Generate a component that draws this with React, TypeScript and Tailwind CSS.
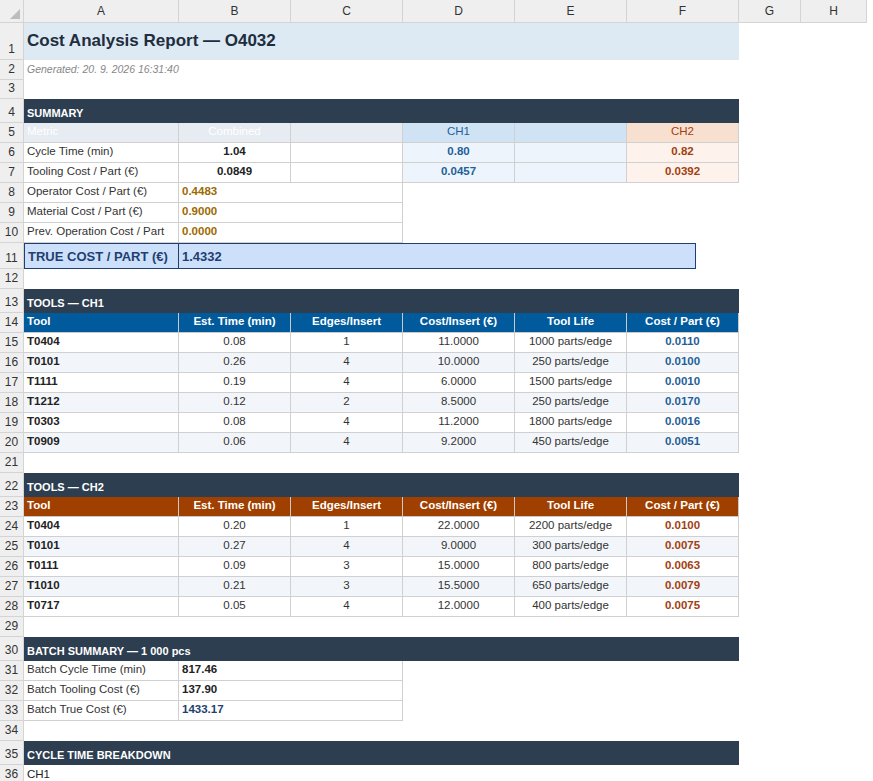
import React from "react"

const W = [155, 112, 112, 112, 112, 112, 62, 66]
const LETTERS = ["A", "B", "C", "D", "E", "F", "G", "H"]

type CellDef = { span?: number; cls?: string; text?: React.ReactNode }

const sum = (from: number, n: number) => W.slice(from, from + n).reduce((a, b) => a + b, 0)

function Row({ n, h, cells = [] }: { n: number; h: number; cells?: CellDef[] }) {
  let col = 0
  const out: React.ReactNode[] = []
  for (const c of cells) {
    const span = c.span ?? 1
    out.push(
      <div
        key={col}
        style={{ width: sum(col, span) }}
        className={`shrink-0 box-border flex items-end pb-[2px] px-[3px] overflow-hidden whitespace-nowrap ${c.cls ?? ""}`}
      >
        {c.text}
      </div>
    )
    col += span
  }
  return (
    <div className="flex" style={{ height: h }}>
      <div className="w-[24px] shrink-0 bg-[#efefef] border-r border-b border-[#d4d4d4] flex items-end justify-center pb-[1px] text-[12px] text-[#333]">
        {n}
      </div>
      {out}
    </div>
  )
}

const bd = "border-r border-b border-[#d0d0d0]"
const dark = (t: string): CellDef[] => [{ span: 6, cls: "bg-[#2d3e50] text-white font-bold text-[11px]", text: t }]

function ToolTable({ start, head, val, rows }: { start: number; head: string; val: string; rows: string[][] }) {
  const hd = `${head} text-white font-bold border-r border-b border-[#c9c9c9] justify-center`
  return (
    <>
      <Row n={start} h={20} cells={[
        { cls: `${hd} !justify-start`, text: "Tool" },
        { cls: hd, text: "Est. Time (min)" },
        { cls: hd, text: "Edges/Insert" },
        { cls: hd, text: "Cost/Insert (€)" },
        { cls: hd, text: "Tool Life" },
        { cls: hd, text: "Cost / Part (€)" },
      ]} />
      {rows.map((r, i) => {
        const bg = i % 2 ? "bg-[#f2f6fa]" : "bg-white"
        return (
          <Row key={i} n={start + 1 + i} h={20} cells={[
            { cls: `${bd} ${bg} font-bold text-[#222]`, text: r[0] },
            { cls: `${bd} ${bg} justify-center`, text: r[1] },
            { cls: `${bd} ${bg} justify-center`, text: r[2] },
            { cls: `${bd} ${bg} justify-center`, text: r[3] },
            { cls: `${bd} ${bg} justify-center`, text: r[4] },
            { cls: `${bd} ${bg} justify-center font-bold ${val}`, text: r[5] },
          ]} />
        )
      })}
    </>
  )
}

export default function App() {
  const gold = "text-[#9c6a00] font-bold"
  return (
    <div className="w-[873px] h-[781px] overflow-hidden bg-white text-[#333] text-[11.5px]" style={{ fontFamily: '"Liberation Sans", Arial, sans-serif' }}>
      <div className="flex h-[23px]">
        <div className="w-[24px] shrink-0 bg-[#efefef] border-r border-b border-[#d4d4d4] relative">
          <div className="absolute right-[3px] bottom-[3px] w-0 h-0 border-l-[10px] border-l-transparent border-b-[10px] border-b-[#bdbdbd]" />
        </div>
        {LETTERS.map((l, i) => (
          <div key={l} style={{ width: W[i] }} className="shrink-0 bg-[#efefef] border-r border-b border-[#d4d4d4] flex items-center justify-center text-[12px] text-[#333]">
            {l}
          </div>
        ))}
      </div>
      <Row n={1} h={37} cells={[{ span: 6, cls: "bg-[#dde9f3] text-[#1f2d3d] font-bold text-[17px] !pb-[7px]", text: "Cost Analysis Report — O4032" }]} />
      <Row n={2} h={20} cells={[{ span: 6, cls: "italic text-[#888] text-[10.5px]", text: "Generated: 20. 9. 2026 16:31:40" }]} />
      <Row n={3} h={19} />
      <Row n={4} h={24} cells={dark("SUMMARY")} />
      <Row n={5} h={20} cells={[
        { cls: `${bd} bg-[#e7ecf2] text-white`, text: "Metric" },
        { cls: `${bd} bg-[#e7ecf2] text-white justify-center`, text: "Combined" },
        { cls: `${bd} bg-[#e7ecf2]` },
        { cls: `${bd} bg-[#d0e3f5] text-[#1f5f99] justify-center`, text: "CH1" },
        { cls: `${bd} bg-[#d0e3f5]` },
        { cls: `${bd} bg-[#f7e0d0] text-[#a3400f] justify-center`, text: "CH2" },
      ]} />
      {[["Cycle Time (min)", "1.04", "0.80", "0.82"], ["Tooling Cost / Part (€)", "0.0849", "0.0457", "0.0392"]].map((r, i) => (
        <Row key={i} n={6 + i} h={20} cells={[
          { cls: bd, text: r[0] },
          { cls: `${bd} justify-center font-bold text-[#222]`, text: r[1] },
          { cls: bd },
          { cls: `${bd} bg-[#edf4fc] justify-center font-bold text-[#1f5f99]`, text: r[2] },
          { cls: `${bd} bg-[#edf4fc]` },
          { cls: `${bd} bg-[#fdf3ec] justify-center font-bold text-[#a3400f]`, text: r[3] },
        ]} />
      ))}
      {[["Operator Cost / Part (€)", "0.4483"], ["Material Cost / Part (€)", "0.9000"], ["Prev. Operation Cost / Part", "0.0000"]].map((r, i) => (
        <Row key={i} n={8 + i} h={20} cells={[
          { cls: bd, text: r[0] },
          { span: 2, cls: `${bd} ${gold}`, text: r[1] },
        ]} />
      ))}
      <div className="flex h-[26px]">
        <div className="w-[24px] shrink-0 bg-[#efefef] border-r border-b border-[#d4d4d4] flex items-end justify-center pb-[1px] text-[12px]">11</div>
        <div className="w-[672px] box-border flex bg-[#cce0fb] border border-[#1f3f6e] text-[#1f3f6e] font-bold">
          <div className="w-[154px] border-r border-[#1f3f6e] flex items-end pb-[2px] px-[3px] text-[13px]">TRUE COST / PART (€)</div>
          <div className="flex items-end pb-[2px] px-[3px] text-[13px]">1.4332</div>
        </div>
      </div>
      <Row n={12} h={20} />
      <Row n={13} h={24} cells={dark("TOOLS — CH1")} />
      <ToolTable start={14} head="bg-[#005a9c]" val="text-[#1f5f99]" rows={[
        ["T0404", "0.08", "1", "11.0000", "1000 parts/edge", "0.0110"],
        ["T0101", "0.26", "4", "10.0000", "250 parts/edge", "0.0100"],
        ["T1111", "0.19", "4", "6.0000", "1500 parts/edge", "0.0010"],
        ["T1212", "0.12", "2", "8.5000", "250 parts/edge", "0.0170"],
        ["T0303", "0.08", "4", "11.2000", "1800 parts/edge", "0.0016"],
        ["T0909", "0.06", "4", "9.2000", "450 parts/edge", "0.0051"],
      ]} />
      <Row n={21} h={20} />
      <Row n={22} h={24} cells={dark("TOOLS — CH2")} />
      <ToolTable start={23} head="bg-[#a04000]" val="text-[#a3400f]" rows={[
        ["T0404", "0.20", "1", "22.0000", "2200 parts/edge", "0.0100"],
        ["T0101", "0.27", "4", "9.0000", "300 parts/edge", "0.0075"],
        ["T0111", "0.09", "3", "15.0000", "800 parts/edge", "0.0063"],
        ["T1010", "0.21", "3", "15.5000", "650 parts/edge", "0.0079"],
        ["T0717", "0.05", "4", "12.0000", "400 parts/edge", "0.0075"],
      ]} />
      <Row n={29} h={20} />
      <Row n={30} h={24} cells={dark("BATCH SUMMARY — 1 000 pcs")} />
      {[["Batch Cycle Time (min)", "817.46"], ["Batch Tooling Cost (€)", "137.90"], ["Batch True Cost (€)", "1433.17"]].map((r, i) => (
        <Row key={i} n={31 + i} h={20} cells={[
          { cls: bd, text: r[0] },
          { span: 2, cls: `${bd} font-bold ${i === 2 ? "text-[#1f3f6e]" : "text-[#222]"}`, text: r[1] },
        ]} />
      ))}
      <Row n={34} h={20} />
      <Row n={35} h={24} cells={dark("CYCLE TIME BREAKDOWN")} />
      <Row n={36} h={20} cells={[{ cls: "text-[#222]", text: "CH1" }]} />
    </div>
  )
}
